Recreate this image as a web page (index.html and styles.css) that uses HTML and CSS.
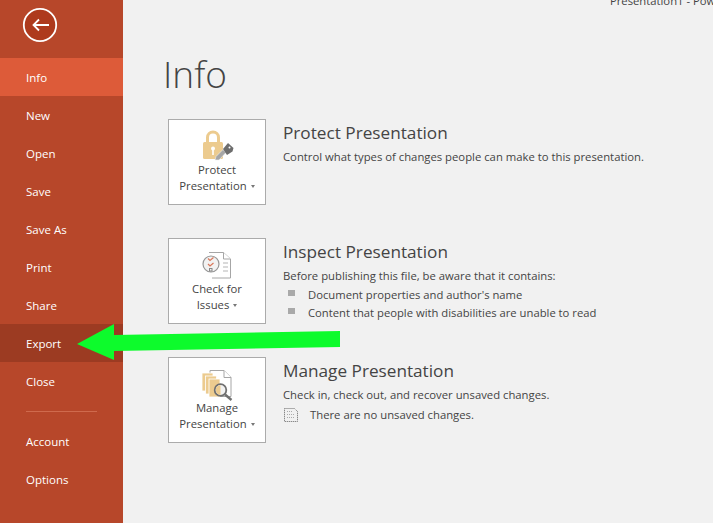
FILE: index.html
```html
<!DOCTYPE html>
<html lang="en">
<head>
    <meta charset="UTF-8">
    <title>Info</title>
    <link rel="stylesheet" href="styles.css">
</head>
<body>
<div class="app">
    <!-- backstage menu -->
    <nav class="side">
        <div class="back-row">
            <svg class="back" width="36" height="36" viewBox="0 0 36 36">
                <circle cx="18" cy="18" r="16.200" fill="#ae3a1d" stroke="#fff" stroke-width="1.800"/>
                <path d="M27 18H11.500M17 12.500L11.500 18l5.500 5.500" fill="none" stroke="#fff" stroke-width="1.800"/>
            </svg>
        </div>
        <a class="nav-item active">Info</a>
        <a class="nav-item">New</a>
        <a class="nav-item">Open</a>
        <a class="nav-item">Save</a>
        <a class="nav-item">Save As</a>
        <a class="nav-item">Print</a>
        <a class="nav-item">Share</a>
        <a class="nav-item hover">Export</a>
        <a class="nav-item">Close</a>
        <div class="sep"></div>
        <a class="nav-item">Account</a>
        <a class="nav-item">Options</a>
    </nav>

    <main class="content">
        <div class="doc-title"><span>Presentation1 - PowerPoint</span></div>
        <h1>Info</h1>

        <section class="sec">
            <button type="button" class="big-btn">
                <svg class="ico" width="34" height="34" viewBox="0 0 34 34">
                    <path d="M7.500 14V8.500a5.500 5.500 0 0 1 11 0V14" fill="none" stroke="#eccb8f" stroke-width="3"/>
                    <rect x="3" y="13" width="20" height="17" rx="1.500" fill="#eccb8f"/>
                    <circle cx="13" cy="19.500" r="2" fill="#fff"/>
                    <rect x="12.200" y="20" width="1.600" height="6" fill="#fff"/>
                    <path d="M15 31l1-3.500 7-7 3 3-7 7.500z" fill="#a6a6a6" stroke="#f1f1f1" stroke-width=".6"/>
                    <path d="M23 20l5-6 5.500 5-1 3.500-5.500 3.500z" fill="#6d6d6d"/>
                    <circle cx="29.500" cy="18.500" r="1" fill="#fff"/>
                </svg>
                <span class="btn-label">Protect<br>Presentation<i class="caret"></i></span>
            </button>
            <div class="sec-text">
                <h2>Protect Presentation</h2>
                <p>Control what types of changes people can make to this presentation.</p>
            </div>
        </section>

        <section class="sec">
            <button type="button" class="big-btn">
                <svg class="ico" width="30" height="30" viewBox="0 0 30 30">
                    <path d="M7 .5h14.500L28.500 7v19H10" fill="#fff" stroke="#a6a6a6"/>
                    <path d="M21.500 .5V7h7" fill="#fff" stroke="#a6a6a6"/>
                    <path d="M21 11h5M21 15h5M21 19h5" stroke="#b5b5b5"/>
                    <circle cx="9" cy="12" r="8" fill="#f2f2f2" stroke="#969696" stroke-width="1.200"/>
                    <path d="M6 6.500l2 2 3.500-3M6 12l2 2 3.500-3" fill="none" stroke="#d9775a" stroke-width="1.200"/>
                    <rect x="7.500" y="16.500" width="2.500" height="2.500" fill="none" stroke="#888"/>
                </svg>
                <span class="btn-label">Check for<br>Issues<i class="caret"></i></span>
            </button>
            <div class="sec-text">
                <h2>Inspect Presentation</h2>
                <p>Before publishing this file, be aware that it contains:</p>
                <ul class="checks">
                    <li>Document properties and author's name</li>
                    <li>Content that people with disabilities are unable to read</li>
                </ul>
            </div>
        </section>

        <section class="sec">
            <button type="button" class="big-btn">
                <svg class="ico" width="33" height="33" viewBox="0 0 33 33">
                    <path d="M9 2.500h14l7 7v19H9z" fill="#fff" stroke="#a6a6a6"/>
                    <path d="M23 2.500v7h7" fill="#fff" stroke="#a6a6a6"/>
                    <rect x="1" y="5" width="11" height="18" fill="#eccb8f" stroke="#fff" stroke-width=".8"/>
                    <rect x="4.500" y="8" width="11" height="18" fill="#eccb8f" stroke="#fff" stroke-width=".8"/>
                    <rect x="8" y="11" width="11" height="18" fill="#eccb8f" stroke="#fff" stroke-width=".8"/>
                    <circle cx="19.500" cy="22" r="5.800" fill="#f2f2f2" stroke="#707070" stroke-width="1.800"/>
                    <path d="M19.500 17.200a4.800 4.800 0 0 0 0 9.600z" fill="#eccb8f"/>
                    <path d="M24 26.500l6.500 5.500" stroke="#707070" stroke-width="2.400"/>
                </svg>
                <span class="btn-label">Manage<br>Presentation<i class="caret"></i></span>
            </button>
            <div class="sec-text">
                <h2>Manage Presentation</h2>
                <p>Check in, check out, and recover unsaved changes.</p>
                <div class="no-changes">
                    <svg width="16" height="14" viewBox="0 0 16 14">
                        <path d="M1.500 .5h10l3 3v10h-13z" fill="none" stroke="#666" stroke-dasharray="1 1"/>
                        <path d="M4 3.500h5M4 6.500h8M4 9.500h8" stroke="#aaa" stroke-dasharray="1 1"/>
                    </svg>
                    <span>There are no unsaved changes.</span>
                </div>
            </div>
        </section>
    </main>

    <!-- green annotation arrow on top of the screenshot -->
    <svg class="arrow" width="264" height="36" viewBox="0 0 264 36">
        <path d="M1 20L38 0v11L264 7v16L38 27v9z" fill="#0dfb2c"/>
    </svg>
</div>
</body>
</html>
```

FILE: styles.css
```css
html, body { margin: 0; padding: 0; height: 100%; overflow: hidden; }
body { font-family: "Open Sans", "Noto Sans", sans-serif; background: #f1f1f1; color: #444; }
.app { display: flex; height: 523px; position: relative; overflow: hidden; }

.side { width: 123px; flex: none; background: #b7472a; color: #fff; font-size: 11.500px; }
.back-row { height: 58px; padding: 7px 0 0 22px; box-sizing: border-box; }
.back { display: block; }
.nav-item { display: block; height: 38px; line-height: 40px; padding-left: 26px; }
.nav-item.active { background: #dd5b39; }
.nav-item.hover { background: #9c3b22; }
.sep { width: 71px; height: 1px; background: #cf6a4d; margin: 11px 0 10px 26px; }

.content { flex: 1; min-width: 0; }
.doc-title { height: 6px; overflow: hidden; padding-left: 487px; font-size: 11.250px; white-space: nowrap; }
.doc-title span { display: block; margin-top: -7px; line-height: 16px; }
h1 { font-size: 37px; font-weight: 300; line-height: 50px; margin: 43px 0 20px 40px; color: #444; }

.sec { display: flex; height: 119px; margin-left: 45px; }
.big-btn {
    width: 98px;
    height: 86px;
    flex: none;
    box-sizing: border-box;
    background: #fff;
    border: 1px solid #ababab;
    padding: 0 0 10px 0;
    font-family: inherit;
    color: #444;
    font-size: 11.300px;
    line-height: 16px;
    display: flex;
    flex-direction: column;
    align-items: center;
    justify-content: flex-end;
}
.ico { display: block; margin-bottom: -1px; }
.btn-label { display: block; text-align: center; }
.caret { display: inline-block; width: 0; height: 0; border: 2.500px solid transparent; border-top: 3px solid #777; border-bottom: 0; margin-left: 4px; vertical-align: middle; }

.sec-text { margin-left: 17px; font-size: 11.300px; line-height: 16px; }
h2 { font-size: 17.200px; font-weight: 400; line-height: 24px; margin: 2px 0 0 0; color: #444; }
.sec-text p { margin: 4px 0 0 0; color: #444; }
.checks { list-style: none; margin: 2px 0 0 0; padding: 0; font-size: 11.250px; }
.checks li { display: flex; align-items: center; height: 18px; padding-left: 25px; position: relative; }
.checks li::before { content: ""; position: absolute; left: 5px; top: 4px; width: 7px; height: 6px; background: #a9a9a9; }
.no-changes { display: flex; align-items: center; gap: 11px; margin-top: 3px; height: 17px; }
.no-changes svg { flex: none; }

.arrow { position: absolute; left: 76px; top: 324px; }
```
